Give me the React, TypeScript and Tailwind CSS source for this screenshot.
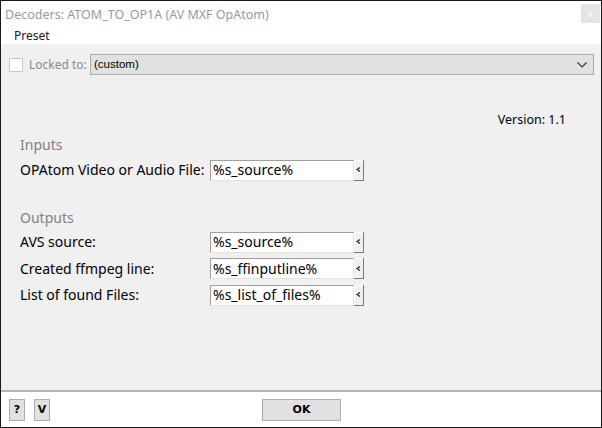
import React from 'react';

const ui = { fontFamily: '"Noto Sans", "Open Sans", Arial, sans-serif' };
const dlg = { fontFamily: '"DejaVu Sans", "Liberation Sans", sans-serif' };

function Field({ value }: { value: string }) {
  return (
    <div className="flex h-[21px] items-stretch">
      <div className="flex w-[144px] items-center border-t border-l border-t-[#a0a0a0] border-l-[#a0a0a0] border-b border-r border-b-[#e3e3e3] border-r-[#e3e3e3] bg-white pl-[2px] text-[14px] leading-none text-black">
        {value}
      </div>
      <div className="flex w-[10px] items-center justify-center border-r border-b border-r-[#7a7a7a] border-b-[#7a7a7a] bg-[#f0f0f0] shadow-[inset_1px_1px_0_#ffffff]">
        <svg width="5" height="5" viewBox="0 0 5 5">
          <path d="M4 0.5 L1 2.5 L4 4.5" fill="none" stroke="#202020" strokeWidth="1.2" />
        </svg>
      </div>
    </div>
  );
}

function Row({ label, value }: { label: string; value: string }) {
  return (
    <div className="flex items-center">
      <span className="w-[190px] text-[14px] leading-none text-black">{label}</span>
      <Field value={value} />
    </div>
  );
}

export default function App() {
  return (
    <div className="flex h-[428px] w-[602px] flex-col border border-[#1a1a1a] bg-[#f0f0f0]" style={ui}>
      {/* Title bar */}
      <div className="flex h-[28px] items-start justify-between bg-white pl-[4px] pr-[1px]">
        <span className="mt-[5px] text-[12.5px] text-[#999999]">Decoders: ATOM_TO_OP1A (AV MXF OpAtom)</span>
        <div className="mt-[3px] flex h-[19px] w-[19px] items-center justify-center bg-[#e5e5e5] text-[9px] leading-none text-white">x</div>
      </div>

      {/* Menu */}
      <div className="flex h-[15px] items-start bg-white pl-[13px]">
        <span className="-mt-[1px] text-[12px] leading-[15px] text-[#222222]">Preset</span>
      </div>

      {/* Body */}
      <div className="flex flex-1 flex-col">
        <div className="mt-[10px] flex items-center pl-[8px] pr-[7px]">
          <div className="h-[14px] w-[14px] border border-[#c8c8c8] bg-white" />
          <span className="ml-[6px] w-[61px] text-[12px] text-[#8a8a8a]">Locked to:</span>
          <div className="flex h-[21px] flex-1 items-center justify-between border border-[#adadad] bg-[#e1e1e1] pl-[3px] pr-[6px]">
            <span className="text-[11.5px] text-black" style={{ fontFamily: '"Liberation Sans", Arial, sans-serif' }}>(custom)</span>
            <svg width="10" height="6" viewBox="0 0 10 6">
              <path d="M0.5 0.5 L5 5 L9.5 0.5" fill="none" stroke="#333333" strokeWidth="1.1" />
            </svg>
          </div>
        </div>

        <div className="mt-[39px] flex justify-end pr-[35px]">
          <span className="text-[12.5px] leading-none text-black">Version: 1.1</span>
        </div>

        <div className="mt-[11px] pl-[19px]">
          <div className="text-[14px] leading-none text-[#808080]">Inputs</div>
          <div className="mt-[8px]">
            <Row label="OPAtom Video or Audio File:" value="%s_source%" />
          </div>

          <div className="mt-[30px] text-[14px] leading-none text-[#808080]">Outputs</div>
          <div className="mt-[7px] flex flex-col gap-[5.5px]">
            <Row label="AVS source:" value="%s_source%" />
            <Row label="Created ffmpeg line:" value="%s_ffinputline%" />
            <Row label="List of found Files:" value="%s_list_of_files%" />
          </div>
        </div>
      </div>

      {/* Footer */}
      <div className="flex h-[37px] items-start border-t-2 border-[#b4b4b4] bg-white pt-[7px] pl-[8px]" style={dlg}>
        <button className="flex h-[22px] w-[16px] items-center justify-center border border-[#adadad] bg-[#e1e1e1] text-[11px] font-bold text-black">?</button>
        <button className="ml-[9px] flex h-[22px] w-[16px] items-center justify-center border border-[#adadad] bg-[#e1e1e1] text-[11px] font-bold text-black">V</button>
        <button className="ml-[212px] flex h-[22px] w-[79px] items-center justify-center border border-[#adadad] bg-[#e1e1e1] text-[11px] font-bold text-black">OK</button>
      </div>
    </div>
  );
}
